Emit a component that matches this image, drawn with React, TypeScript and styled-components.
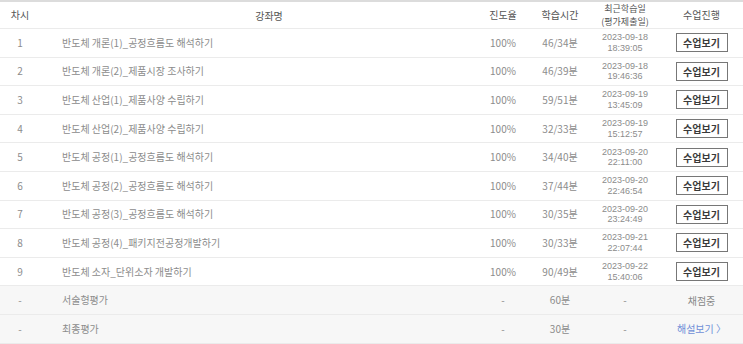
import styled, { createGlobalStyle } from "styled-components";

const GlobalStyle = createGlobalStyle`
  html, body {
    margin: 0;
    padding: 0;
    background: #ffffff;
  }
  body {
    font-family: "Noto Sans CJK KR", "Noto Sans", sans-serif;
  }
`;

type Lesson = {
  no: string;
  title: string;
  rate: string;
  time: string;
  date: string;
  clock: string;
};

const lessons: Lesson[] = [
  { no: "1", title: "반도체 개론(1)_공정흐름도 해석하기", rate: "100%", time: "46/34분", date: "2023-09-18", clock: "18:39:05" },
  { no: "2", title: "반도체 개론(2)_제품시장 조사하기", rate: "100%", time: "46/39분", date: "2023-09-18", clock: "19:46:36" },
  { no: "3", title: "반도체 산업(1)_제품사양 수립하기", rate: "100%", time: "59/51분", date: "2023-09-19", clock: "13:45:09" },
  { no: "4", title: "반도체 산업(2)_제품사양 수립하기", rate: "100%", time: "32/33분", date: "2023-09-19", clock: "15:12:57" },
  { no: "5", title: "반도체 공정(1)_공정흐름도 해석하기", rate: "100%", time: "34/40분", date: "2023-09-20", clock: "22:11:00" },
  { no: "6", title: "반도체 공정(2)_공정흐름도 해석하기", rate: "100%", time: "37/44분", date: "2023-09-20", clock: "22:46:54" },
  { no: "7", title: "반도체 공정(3)_공정흐름도 해석하기", rate: "100%", time: "30/35분", date: "2023-09-20", clock: "23:24:49" },
  { no: "8", title: "반도체 공정(4)_패키지전공정개발하기", rate: "100%", time: "30/33분", date: "2023-09-21", clock: "22:07:44" },
  { no: "9", title: "반도체 소자_단위소자 개발하기", rate: "100%", time: "90/49분", date: "2023-09-22", clock: "15:40:06" },
];

// Styled components
const Table = styled.div`
  width: 743px;
  border-top: 2px solid #dcdcdc;
`;

const Row = styled.div<{ $exam?: boolean; $head?: boolean }>`
  display: grid;
  grid-template-columns: 40px 1fr 54px 60px 70px 83px;
  align-items: center;
  height: ${({ $head }) => ($head ? "27px" : "28.6px")};
  box-sizing: border-box;
  border-bottom: 1px solid #ebebeb;
  background: ${({ $exam }) => ($exam ? "#f7f7f7" : "#ffffff")};
  font-size: 10px;
  color: ${({ $head }) => ($head ? "#555555" : "#8c8c8c")};
`;

const Cell = styled.div<{ $left?: boolean }>`
  text-align: ${({ $left }) => ($left ? "left" : "center")};
  padding-left: ${({ $left }) => ($left ? "22px" : "0")};
  line-height: 14px;
  white-space: nowrap;
`;

const TitleHead = styled.div`
  text-align: center;
  padding-left: 22px;
`;

const HeadLines = styled.div`
  display: flex;
  flex-direction: column;
  align-items: center;
  font-size: 9px;
  line-height: 13px;
  white-space: nowrap;
`;

const DateCell = styled.div`
  display: flex;
  flex-direction: column;
  align-items: center;
  font-family: "Liberation Sans", "Noto Sans CJK KR", sans-serif;
  font-size: 9px;
  line-height: 10.5px;
  color: #8c8c8c;
`;

const ViewButton = styled.button`
  justify-self: center;
  width: 52px;
  height: 19px;
  padding: 0;
  border: 1px solid #777777;
  background: #ffffff;
  color: #3a3a3a;
  font-family: "Noto Sans CJK KR", sans-serif;
  font-size: 10px;
  font-weight: 700;
  cursor: pointer;
`;

const Status = styled.span<{ $link?: boolean }>`
  justify-self: center;
  font-size: 10px;
  color: ${({ $link }) => ($link ? "#6f8fd8" : "#888888")};
`;

export default function App() {
  return (
    <>
      <GlobalStyle />
      <Table>
        <Row $head>
          <Cell>차시</Cell>
          <TitleHead>강좌명</TitleHead>
          <Cell>진도율</Cell>
          <Cell>학습시간</Cell>
          <HeadLines>
            <span>최근학습일</span>
            <span>(평가제출일)</span>
          </HeadLines>
          <Cell>수업진행</Cell>
        </Row>
        {lessons.map((l) => (
          <Row key={l.no}>
            <Cell>{l.no}</Cell>
            <Cell $left>{l.title}</Cell>
            <Cell>{l.rate}</Cell>
            <Cell>{l.time}</Cell>
            <DateCell>
              <span>{l.date}</span>
              <span>{l.clock}</span>
            </DateCell>
            <ViewButton>수업보기</ViewButton>
          </Row>
        ))}
        <Row $exam>
          <Cell>-</Cell>
          <Cell $left>서술형평가</Cell>
          <Cell>-</Cell>
          <Cell>60분</Cell>
          <Cell>-</Cell>
          <Status>채점중</Status>
        </Row>
        <Row $exam>
          <Cell>-</Cell>
          <Cell $left>최종평가</Cell>
          <Cell>-</Cell>
          <Cell>30분</Cell>
          <Cell>-</Cell>
          <Status $link>해설보기 〉</Status>
        </Row>
      </Table>
    </>
  );
}
